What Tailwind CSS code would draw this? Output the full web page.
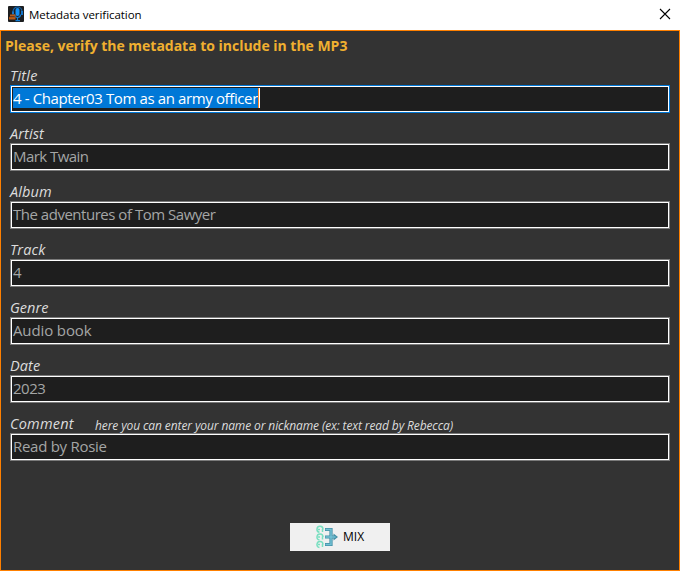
<!DOCTYPE html>
<html lang="en">
<head>
<meta charset="utf-8">
<title>Metadata verification</title>
<script src="https://cdn.jsdelivr.net/npm/@tailwindcss/browser@4"></script>
</head>
<body class="h-[571px] w-[680px] overflow-hidden bg-white font-['Open_Sans','Noto_Sans',sans-serif]">
<div class="flex h-full flex-col">
  <header class="flex h-[30px] shrink-0 items-center bg-white pr-[9px] pl-2">
    <svg class="h-4 w-4 -translate-y-px" viewBox="0 0 16 16">
      <rect width="16" height="16" rx="1" fill="#1d1e20"/>
      <path d="M5 6V5.500a4.300 4.300 0 0 1 9 0V6" fill="none" stroke="#1267b2" stroke-width="1.200"/>
      <path d="M4 5.500h2v3h-2zM13 5h2v4h-2z" fill="#1675c8"/>
      <rect x="7.500" y="2" width="4" height="8" rx="2" fill="#1490f5"/>
      <path d="M6.500 8.500c0 4 6 4 6 0M9.500 11v4M7.500 14.700h4.500" fill="none" stroke="#127ed6" stroke-width="1.200"/>
      <path d="M2 8.500h5.500v2H2zM1 11h6.500v2.500H1z" fill="#b95b18"/>
      <path d="M1 10.800h6.500" stroke="#6e3712" stroke-width=".6"/>
    </svg>
    <h1 class="ml-[5px] text-[11.500px] leading-4 tracking-[-0.05px] text-black">Metadata verification</h1>
    <svg class="ml-auto h-3 w-3 -translate-y-px" viewBox="0 0 12 12"><path d="M1 1l10 10M11 1L1 11" fill="none" stroke="#000" stroke-width="1.100"/></svg>
  </header>
  <main class="flex flex-1 flex-col border border-[#ff8000] bg-[#333333]">
    <h2 class="h-[35px] pl-1 text-[14px] leading-[30px] font-bold tracking-[-0.02px] text-[#f0b030]">Please, verify the metadata to include in the MP3</h2>
    <form class="flex flex-col px-[9px]">
      <div class="h-[58px]">
        <label class="block h-[19px] text-[14.500px] leading-[19px] tracking-[0.2px] text-[#dcdcdc] italic">Title</label>
        <div class="h-7 border border-[#0078d7] bg-[#1e1e1e]"><div class="flex h-full items-start border border-white pt-px pl-px"><span class="h-5 w-[245px] bg-[#0078d7] text-[15px] leading-[21px] tracking-[-0.38px] whitespace-nowrap text-white">4 - Chapter03 Tom as an army officer</span><span class="h-5 w-0.5 border-r border-l border-r-white border-l-[#ff8728]"></span></div></div>
      </div>
      <div class="h-[58px]">
        <label class="block h-[19px] text-[14.500px] leading-[19px] tracking-[0.1px] text-[#dcdcdc] italic">Artist</label>
        <div class="h-7 border border-[#7a7a7a] bg-[#1e1e1e]"><div class="h-full border border-white pt-px pl-px text-[15px] leading-[21px] tracking-[-0.56px] text-[#a4a6a6]">Mark Twain</div></div>
      </div>
      <div class="h-[58px]">
        <label class="block h-[19px] text-[14.500px] leading-[19px] tracking-[0.1px] text-[#dcdcdc] italic">Album</label>
        <div class="h-7 border border-[#7a7a7a] bg-[#1e1e1e]"><div class="h-full border border-white pt-px pl-px text-[15px] leading-[21px] tracking-[-0.48px] text-[#a4a6a6]">The adventures of Tom Sawyer</div></div>
      </div>
      <div class="h-[58px]">
        <label class="block h-[19px] text-[14.500px] leading-[19px] tracking-[0.1px] text-[#dcdcdc] italic">Track</label>
        <div class="h-7 border border-[#7a7a7a] bg-[#1e1e1e]"><div class="h-full border border-white pt-px pl-px text-[15px] leading-[21px] text-[#a4a6a6]">4</div></div>
      </div>
      <div class="h-[58px]">
        <label class="block h-[19px] text-[14.500px] leading-[19px] text-[#dcdcdc] italic">Genre</label>
        <div class="h-7 border border-[#7a7a7a] bg-[#1e1e1e]"><div class="h-full border border-white pt-px pl-px text-[15px] leading-[21px] tracking-[-0.12px] text-[#a4a6a6]">Audio book</div></div>
      </div>
      <div class="h-[58px]">
        <label class="block h-[19px] text-[14.500px] leading-[19px] tracking-[0.1px] text-[#dcdcdc] italic">Date</label>
        <div class="h-7 border border-[#7a7a7a] bg-[#1e1e1e]"><div class="h-full border border-white pt-px pl-px text-[15px] leading-[21px] tracking-[-0.5px] text-[#a4a6a6]">2023</div></div>
      </div>
      <div class="h-[58px]">
        <div class="flex h-[19px] text-[#dcdcdc] italic"><label class="w-[85px] text-[14.500px] leading-[19px] tracking-[0.2px]">Comment</label><span class="pt-1 text-[12px] leading-4 tracking-[-0.11px] whitespace-nowrap">here you can enter your name or nickname (ex: text read by Rebecca)</span></div>
        <div class="h-7 border border-[#7a7a7a] bg-[#1e1e1e]"><div class="h-full border border-white pt-px pl-px text-[15px] leading-[21px] tracking-[-0.28px] text-[#a4a6a6]">Read by Rosie</div></div>
      </div>
    </form>
    <button type="button" class="mt-auto mb-[19px] flex h-7 w-[100px] items-center self-center bg-[#f0f0f0] pl-[26px] text-[12px] text-black">
      <svg class="h-6 w-[22px]" viewBox="0 0 22 24">
        <g fill="none" stroke="#79dfc0" stroke-width="1.500">
          <path d="M3.500 7.300A3 3 0 1 1 7 4.500M2 4.500h2M6.500 4v3"/>
          <path d="M3.500 15A3 3 0 1 1 7 12M2 12h2M6.500 11.500v3"/>
          <path d="M3.500 22.500A3 3 0 1 1 7 19.500M2 19.500h2M6.500 19v3"/>
        </g>
        <path d="M9 4.500h6v15H9M9 12h10" fill="none" stroke="#438fa6" stroke-width="3.200"/>
        <path d="M17.500 8.500L22 12l-4.500 3.500z" fill="#438fa6"/>
        <path d="M9.500 4.500H15v15H9.500M9.500 12h10" fill="none" stroke="#73c1d4" stroke-width="1.500"/>
      </svg>
      <span class="ml-[5px]">MIX</span>
    </button>
  </main>
</div>
</body>
</html>
